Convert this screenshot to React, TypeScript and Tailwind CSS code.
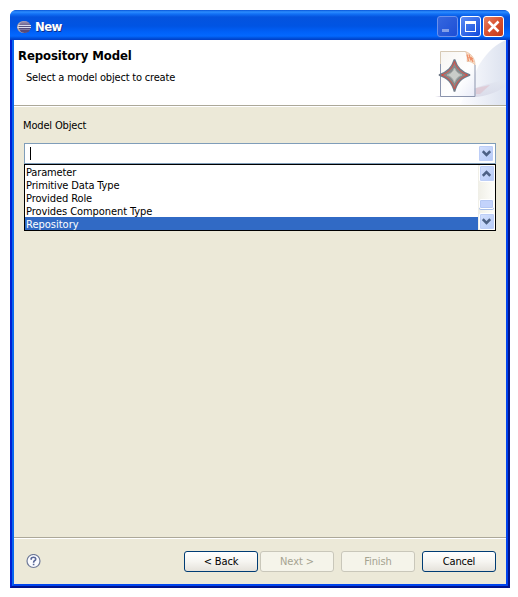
import React from 'react';

const items = [
  { label: 'Parameter', cls: 'tracking-[-0.15px]' },
  { label: 'Primitive Data Type', cls: 'tracking-[-0.14px]' },
  { label: 'Provided Role', cls: 'tracking-[-0.1px]' },
  { label: 'Provides Component Type', cls: 'tracking-[-0.08px]' },
  { label: 'Repository', cls: 'tracking-[0px]' },
];

function Chevron({ up = false }: { up?: boolean }) {
  return (
    <svg width="9" height="7" viewBox="0 0 9 7" className={up ? 'rotate-180' : ''}>
      <path d="M.8 1.200 4.500 4.900 8.200 1.200" fill="none" stroke="#4d6185" strokeWidth="2.500" />
    </svg>
  );
}

function ScrollButton({ up = false }: { up?: boolean }) {
  return (
    <div className="flex h-[17px] w-4 shrink-0 items-center justify-center rounded-[2px] border border-white bg-linear-to-br from-[#d5e1fd] to-[#b4c9f7] shadow-[inset_0_0_0_1px_#bdcef7]">
      <Chevron up={up} />
    </div>
  );
}

function EclipseIcon() {
  return (
    <svg width="16" height="16" viewBox="0 0 16 16">
      <defs>
        <linearGradient id="orb" x1="0" y1="0" x2="0" y2="1">
          <stop offset="0" stopColor="#a79bb8" />
          <stop offset=".5" stopColor="#4f4a7d" />
          <stop offset="1" stopColor="#5a4a78" />
        </linearGradient>
      </defs>
      <ellipse cx="7.600" cy="8" rx="6.600" ry="6" fill="#b6a7a9" />
      <ellipse cx="8.800" cy="8" rx="6" ry="6" fill="url(#orb)" />
      <path d="M2 6.500h13M1.500 8.500h13.500" stroke="#d9dced" strokeWidth="1" />
      <path d="M3 10.500h11" stroke="#9a98bd" strokeWidth=".6" />
    </svg>
  );
}

function ModelArt() {
  return (
    <svg width="76" height="65" viewBox="0 0 76 65" className="shrink-0">
      <defs>
        <linearGradient id="sweep" x1="0" y1="0" x2="1" y2="0">
          <stop offset="0" stopColor="#fdfdff" />
          <stop offset="1" stopColor="#dce2ef" />
        </linearGradient>
        <linearGradient id="page" x1="0" y1="0" x2="1" y2="1">
          <stop offset="0" stopColor="#f7f5f2" />
          <stop offset=".6" stopColor="#ffffff" />
          <stop offset="1" stopColor="#e9ecf8" />
        </linearGradient>
        <linearGradient id="shade" x1="0" y1="1" x2="1" y2="0">
          <stop offset="0" stopColor="#c9c5d8" />
          <stop offset=".6" stopColor="#d8dbe9" />
          <stop offset="1" stopColor="#e3e7f1" />
        </linearGradient>
      </defs>
      <path d="M76 0C66 4 58 11 49 25L30 65h46z" fill="url(#sweep)" />
      <path d="M76 40C68 41 56 44 46 48L5 57h42c13-2 22-6 29-11z" fill="url(#shade)" opacity=".65" />
      <path d="M46 48 60 45l-10 9h-4z" fill="#dfbcc7" opacity=".55" />
      <path d="M10.500 11.500h25l9 12v33h-34z" fill="url(#page)" />
      <path d="M10.500 56V11.500h25" fill="none" stroke="#d6c9b5" />
      <path d="M10.500 24v32.500h34.500V25" fill="none" stroke="#8b94ad" />
      <path d="M35.500 11.500c2 3 2 8 1.500 10 3-.5 6 1 8 3.500 0-6-3-11-9.500-13.500z" fill="#fbdcc4" stroke="#e3bda0" strokeWidth=".7" />
      <path d="M37 14.500 38.500 21M39 14.500l2 6M41 17l2 5M38 17.500l5 1" stroke="#ee9069" strokeWidth="1.200" />
      <path d="M24.500 19.500c2.500 8 6.500 12.500 15.500 15.500-9 3-13 7.500-15.500 16.500-2.500-9-6.500-13.500-15.500-16.500 9-3 13-7.500 15.500-15.500z" fill="#8d9394" stroke="#717b89" strokeWidth="1.700" strokeLinejoin="bevel" />
      <path d="M24.500 21.500c2 6.500 6 11 13 13.500-7 2.500-11 7-13 14-2-7-6-11.500-13-14 7-2.500 11-7 13-13.500z" fill="#858b8c" stroke="#dc4c42" strokeWidth="1" strokeLinejoin="bevel" />
      <path d="M24.500 28c1.800 4 3.500 5.500 7.500 7-4 1.500-5.700 3.500-7.500 7.500-1.800-4-3.500-6-7.500-7.500 4-1.500 5.700-3 7.500-7z" fill="#c9cdc9" stroke="#b1b5b2" />
    </svg>
  );
}

const titleButton = 'flex h-[21px] w-[21px] items-center justify-center rounded-[3px] border';

function TitleBar() {
  return (
    <div className="flex h-[30px] shrink-0 items-center rounded-t-[6px] bg-[linear-gradient(180deg,#0754d8_0px,#2c8dff_2px,#1270f5_4px,#0453de_7px,#0054e3_16px,#0061f9_22px,#0368ff_26px,#0052dd_28px,#003dc5_30px)] pr-[6px] pl-[6px] pt-[3px]">
      <EclipseIcon />
      <span className="ml-[3px] text-[13px] leading-[16px] font-bold tracking-[-0.6px] text-white [text-shadow:1px_1px_0_#0b2f91]">New</span>
      <div className="ml-auto flex gap-[2px]">
        <div className={`${titleButton} border-[#6b91ec] bg-linear-to-br from-[#3567df] to-[#1d4ed5]`}>
          <svg width="19" height="19" viewBox="0 0 19 19"><path d="M4 12h7v3H4z" fill="#839fe8" /></svg>
        </div>
        <div className={`${titleButton} border-white bg-linear-to-br from-[#5d8bf3] to-[#0c48dc]`}>
          <svg width="19" height="19" viewBox="0 0 19 19"><path d="M4 4h11v11H4zM5 7v7h9V7z" fill="#fff" fillRule="evenodd" /></svg>
        </div>
        <div className={`${titleButton} border-white bg-linear-to-br from-[#e58062] via-[#d8502f] to-[#c33a1a]`}>
          <svg width="19" height="19" viewBox="0 0 19 19"><path d="m4.500 4.500 10 10m0-10-10 10" stroke="#fff" strokeWidth="2.500" /></svg>
        </div>
      </div>
    </div>
  );
}

const enabled = 'border-[#003c74] bg-linear-to-b from-white via-[#f6f5f1] to-[#e5e2db] text-black';
const disabled = 'border-[#c9c7ba] bg-[#f5f4ea] text-[#a5a391]';

function Button({ label, off = false, className = '' }: { label: string; off?: boolean; className?: string }) {
  return (
    <button className={`h-[21px] w-[74px] rounded-[3px] border pt-px text-center leading-[18px] ${off ? disabled : enabled} ${className}`}>
      {label}
    </button>
  );
}

export default function App() {
  return (
    <div className="h-[597px] w-[518px] bg-white pt-[10px] pl-[10px] font-['DejaVu_Sans_Condensed','DejaVu_Sans',sans-serif] text-[11px] [font-stretch:condensed]">
      <div className="flex h-[578px] w-[500px] flex-col rounded-t-[7px] bg-[#0042e8]">
        <TitleBar />
        <div className="flex min-h-0 flex-1 border-x-2 border-b-2 border-l-[#001fd4] border-r-[#00138c] border-b-[#00138c]">
          <div className="flex flex-1 flex-col border-x-2 border-b-2 border-l-[#0866ee] border-r-[#0042ee] border-b-[#0044ee] bg-[#ece9d8]">
            <header className="flex h-[66px] shrink-0 justify-between border-b border-[#aca899] bg-white">
              <div className="pt-[7px] pl-1 whitespace-nowrap text-black">
                <h1 className="text-[13px] leading-[17px] font-bold tracking-[-0.11px]">Repository Model</h1>
                <p className="mt-[6px] ml-2 leading-[16px] tracking-[-0.19px]">Select a model object to create</p>
              </div>
              <ModelArt />
            </header>
            <div className="h-px shrink-0 bg-white" />
            <main className="flex-1 pt-[12px] pr-[10px] pl-[10px]">
              <label className="-ml-px block leading-[14px] tracking-[-0.16px]">Model Object</label>
              <div className="mt-[10px] flex h-[21px] items-center justify-between border border-[#7f9db9] bg-white pr-px pl-[5px]">
                <div className="h-[13px] w-px bg-black" />
                <ScrollButton />
              </div>
              <div className="flex h-[67px] border border-black bg-white">
                <ul className="flex-1">
                  {items.map((it, i) => (
                    <li key={it.label} className={`h-[13px] pt-px pl-px leading-[13px] whitespace-nowrap ${it.cls} ${i === 4 ? 'bg-[#316ac5] text-white' : ''}`}>{it.label}</li>
                  ))}
                </ul>
                <div className="flex w-[17px] flex-col items-center bg-linear-to-r from-[#f0efe7] to-[#fefefb]">
                  <ScrollButton up />
                  <div className="mt-[17px] mb-auto h-[10px] w-[15px] rounded-[2px] border border-white bg-[#c3d3fc] shadow-[0_1px_0_#a6bde8,inset_0_0_0_1px_#b5c8f4]" />
                  <ScrollButton />
                </div>
              </div>
            </main>
            <footer className="flex h-[47px] shrink-0 items-start border-t border-[#aca899] pt-px pr-[10px] shadow-[inset_0_1px_0_#fff]">
              <svg width="15" height="15" viewBox="0 0 15 15" className="mt-[15px] ml-[12px]">
                <circle cx="7.500" cy="7" r="6.500" fill="#fafbff" stroke="#707b99" strokeWidth="1.200" />
                <path d="M5.200 5.700V4.200q.3-1 2.300-1t2.300 1.600q0 1.400-1.300 2-.9.500-.9 1.900M7.600 9.700v1.600" fill="none" stroke="#596797" strokeWidth="1.600" />
              </svg>
              <div className="mt-3 ml-auto flex">
                <Button label="< Back" className="tracking-[-0.15px]" />
                <Button label="Next >" off className="ml-[2px] tracking-[-0.1px]" />
                <Button label="Finish" off className="ml-[7px] pr-0 pl-0 tracking-[-0.1px]" />
                <Button label="Cancel" className="ml-[7px] tracking-[-0.2px]" />
              </div>
            </footer>
          </div>
        </div>
      </div>
    </div>
  );
}
